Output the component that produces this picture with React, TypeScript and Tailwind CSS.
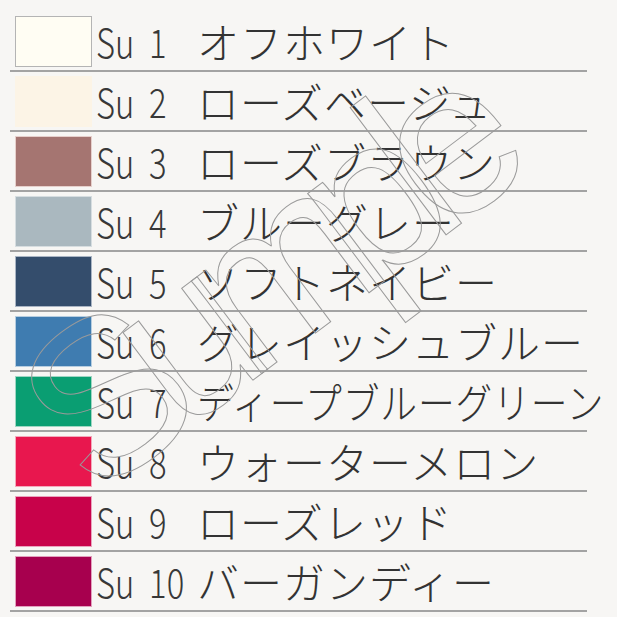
import React from "react";

type Row = { n: string; name: string; sw: string; squeeze?: boolean };

const rows: Row[] = [
  { n: "1", name: "オフホワイト", sw: "bg-[#fffdf3] border border-[#b4b4b4]" },
  { n: "2", name: "ローズベージュ", sw: "bg-[#fcf4e6]" },
  { n: "3", name: "ローズブラウン", sw: "bg-[#a57571] border border-[#e6d0cc]" },
  { n: "4", name: "ブルーグレー", sw: "bg-[#aab8bf] border border-[#d6dde0]" },
  { n: "5", name: "ソフトネイビー", sw: "bg-[#344d6c] border border-[#aab5c4]" },
  { n: "6", name: "グレイッシュブルー", sw: "bg-[#3f7cb0] border border-[#b6cde0]" },
  { n: "7", name: "ディープブルーグリーン", sw: "bg-[#0a9e72] border border-[#9fd6c3]", squeeze: true },
  { n: "8", name: "ウォーターメロン", sw: "bg-[#e8174e] border border-[#f3a9bb]" },
  { n: "9", name: "ローズレッド", sw: "bg-[#c8024a] border border-[#eaa3bd]" },
  { n: "10", name: "バーガンディー", sw: "bg-[#a7004e] border border-[#e2a0bd]" },
];

export default function App() {
  return (
    <div
      className="relative w-[619px] h-[617px] overflow-hidden bg-[#f7f6f4] border-r-2 border-white pt-3 pl-[10px]"
      style={{ fontFamily: '"Noto Sans CJK JP", "Noto Sans", sans-serif' }}
    >
      <div className="w-[577px]">
        {rows.map((r) => (
          <div key={r.n} className="flex items-center h-[60px] border-b-2 border-[#a3a3a3]">
            <div className={"ml-[5px] w-[77px] h-[51px] shrink-0 " + r.sw} />
            <div className="ml-[4px] w-[101px] shrink-0 text-[40px] leading-none font-extralight text-[#383838] whitespace-nowrap">
              <span className="inline-block origin-left scale-x-[0.82]">
                Su<span className="ml-[18px]">{r.n}</span>
              </span>
            </div>
            <div className="text-[42px] leading-none font-extralight text-[#333333] whitespace-nowrap">
              <span
                className={
                  "inline-block origin-left tracking-[1px] " + (r.squeeze ? "scale-x-[0.875]" : "")
                }
              >
                {r.name}
              </span>
            </div>
          </div>
        ))}
      </div>
      <svg
        className="absolute inset-0 pointer-events-none"
        width="619"
        height="617"
        viewBox="0 0 619 617"
      >
        <text
          x="0"
          y="0"
          transform="translate(94 500) rotate(-37)"
          textLength="560"
          lengthAdjust="spacing"
          fontSize="220"
          fontFamily='"Liberation Sans", Arial, sans-serif'
          fill="none"
          stroke="#9a9a9a"
          strokeWidth="1"
        >
          Sumple
        </text>
      </svg>
    </div>
  );
}
